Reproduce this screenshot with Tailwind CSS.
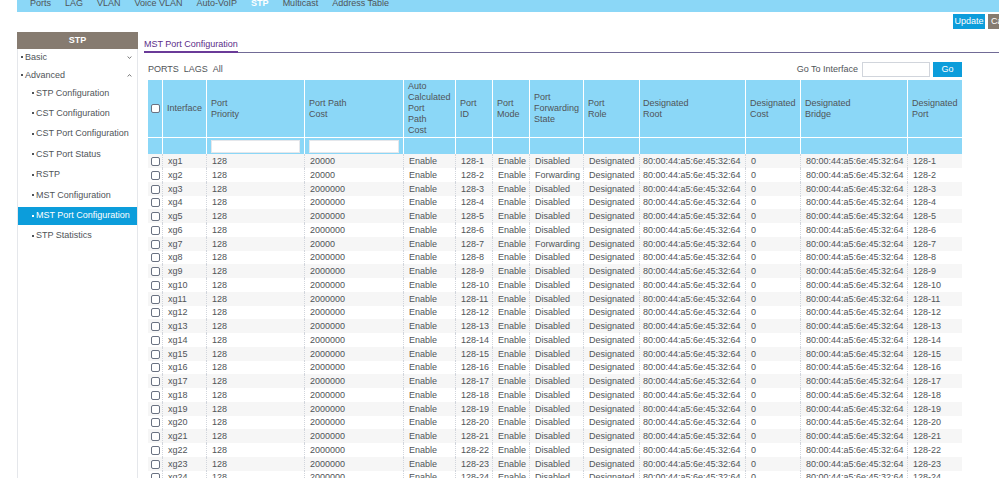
<!DOCTYPE html>
<html lang="en">
<head>
    <meta charset="UTF-8">
    <meta name="viewport" content="width=device-width, initial-scale=1.0">
    <title>MST Port Configuration</title>
    <script src="https://cdn.jsdelivr.net/npm/@tailwindcss/browser@4"></script>
</head>
<body class="h-screen overflow-hidden flex flex-col pl-[17px] bg-white font-['Liberation_Sans',Arial,sans-serif] text-[9px] leading-[11px] text-[#505458]">
    <!-- Top tabs -->
    <nav class="h-3 shrink-0 flex gap-[14px] pl-[13px] leading-[7px] bg-[#8bd7f7]">
        <a href="#">Ports</a>
        <a href="#">LAG</a>
        <a href="#">VLAN</a>
        <a href="#">Voice VLAN</a>
        <a href="#">Auto-VoIP</a>
        <a href="#" class="font-bold text-white">STP</a>
        <a href="#">Multicast</a>
        <a href="#">Address Table</a>
    </nav>

    <!-- Page buttons -->
    <div class="shrink-0 flex justify-end gap-[3px] pt-[2px] pb-[3px] -mr-[23px]">
        <button class="h-[15px] w-8 bg-[#0c9ddb] text-white">Update</button>
        <button class="h-[15px] w-[34px] bg-[#867b70] text-white">Cancel</button>
    </div>

    <div class="flex flex-1 min-h-0">
        <!-- Sidebar -->
        <aside class="w-[121px] shrink-0 border-x border-gray-200">
            <h2 class="-mx-px h-[17px] leading-[17px] text-center font-bold text-white bg-[#867b70]">STP</h2>
            <button class="w-full h-4 flex items-center gap-[2px] pl-[3px] pr-[5px]">
                <span class="size-[2px] bg-[#505458]"></span>Basic
                <svg class="ml-auto" width="5" height="5" viewBox="0 0 5 5" fill="none" stroke="#777"><path d="M.7 1.5l1.8 2 1.8-2"/></svg>
            </button>
            <button class="w-full h-[20px] flex items-center gap-[2px] pl-[3px] pr-[5px]">
                <span class="size-[2px] bg-[#505458]"></span>Advanced
                <svg class="ml-auto" width="5" height="5" viewBox="0 0 5 5" fill="none" stroke="#777"><path d="M.7 3.5l1.8-2 1.8 2"/></svg>
            </button>
            <ul id="menu" class="h-[161px] -mt-px flex flex-col justify-between whitespace-nowrap"></ul>
        </aside>

        <main class="flex-1 min-w-0 pl-[6px]">
            <div class="mt-[5px] flex border-b border-[#716b96]">
                <h1 class="h-4 -mb-px leading-[14px] border-b-2 border-[#6a3a98] text-[#5c2d88]">MST Port Configuration</h1>
            </div>

            <div class="pl-1 pr-[37px]">
                <div class="flex items-center pt-[9px] pb-[3px]">
                    <div class="flex gap-[5px]">
                        <a href="#">PORTS</a>
                        <a href="#">LAGS</a>
                        <a href="#">All</a>
                    </div>
                    <label for="goto" class="ml-auto">Go To Interface</label>
                    <input id="goto" type="text" class="ml-1 w-[68px] h-[15px] px-1 border border-gray-300">
                    <button class="ml-[3px] w-[29px] h-[15px] bg-[#0c9ddb] text-white">Go</button>
                </div>

                <table class="w-full table-fixed border-separate border-spacing-0 text-left whitespace-nowrap">
                    <colgroup>
                        <col class="w-[15px]"><col class="w-[44px]"><col class="w-[98px]"><col class="w-[99px]">
                        <col class="w-[52px]"><col class="w-[37px]"><col class="w-[37px]"><col class="w-[54px]">
                        <col class="w-[56px]"><col class="w-[106px]"><col class="w-[55px]"><col class="w-[107px]">
                        <col class="w-[54px]">
                    </colgroup>
                    <thead class="bg-[#8bd7f7] [&_th]:p-0 [&_th]:pl-1 [&_th]:font-normal [&_th]:border-r [&_th]:border-white [&_th:last-child]:border-r-0">
                        <tr class="h-[58px] [&_th]:border-b">
                            <th class="!pl-[3px]"><input type="checkbox" aria-label="Select all" class="block size-[9px] appearance-none rounded-[2px] border border-gray-500 bg-white"></th>
                            <th>Interface</th>
                            <th>Port<br>Priority</th>
                            <th>Port Path<br>Cost</th>
                            <th>Auto<br>Calculated<br>Port<br>Path<br>Cost</th>
                            <th>Port<br>ID</th>
                            <th>Port<br>Mode</th>
                            <th>Port<br>Forwarding<br>State</th>
                            <th>Port<br>Role</th>
                            <th class="!pl-[3px]">Designated<br>Root</th>
                            <th>Designated<br>Cost</th>
                            <th>Designated<br>Bridge</th>
                            <th>Designated<br>Port</th>
                        </tr>
                        <tr class="h-4">
                            <th></th>
                            <th></th>
                            <th class="!pr-1"><input type="text" aria-label="Port Priority" class="block w-full h-[13px] px-1 bg-white border border-gray-200"></th>
                            <th class="!pr-1"><input type="text" aria-label="Port Path Cost" class="block w-full h-[13px] px-1 bg-white border border-gray-200"></th>
                            <th></th>
                            <th></th>
                            <th></th>
                            <th></th>
                            <th></th>
                            <th></th>
                            <th></th>
                            <th></th>
                            <th></th>
                        </tr>
                    </thead>
                    <tbody id="ports" class="leading-[13px] [&_td]:p-0 [&_td]:pl-[5px] [&_td]:border-r [&_td]:border-dotted [&_td]:border-gray-300 [&_td:last-child]:border-r-0"></tbody>
                </table>
            </div>
        </main>
    </div>

    <script>
        const menu = ["STP Configuration", "CST Configuration", "CST Port Configuration", "CST Port Status",
            "RSTP", "MST Configuration", "MST Port Configuration", "STP Statistics"];

        document.getElementById("menu").innerHTML = menu.map(item => {
            const active = item === "MST Port Configuration";
            return `<li><a href="#" class="h-[18px] flex items-center gap-[2px] pl-[14px] ${active ? "bg-[#0c9ddb] text-white" : ""}">
                <span class="size-[2px] ${active ? "bg-white" : "bg-[#505458]"}"></span>${item}</a></li>`;
        }).join("");

        // Ports with a live link
        const linkUp = [2, 7];
        const bridge = "80:00:44:a5:6e:45:32:64";
        let rows = "";

        for (let i = 1; i <= 24; i++) {
            const cost = i === 1 || linkUp.includes(i) ? 20000 : 2000000;
            const state = linkUp.includes(i) ? "Forwarding" : "Disabled";
            rows += `<tr class="h-[14px] nth-[4n]:h-[13px] odd:bg-[#f6f6f6]">
                <td class="!pl-[3px]"><input type="checkbox" aria-label="Select xg${i}" class="block size-[9px] appearance-none rounded-[2px] border border-gray-500 bg-white"></td>
                <td>xg${i}</td>
                <td>128</td>
                <td>${cost}</td>
                <td>Enable</td>
                <td>128-${i}</td>
                <td>Enable</td>
                <td>${state}</td>
                <td>Designated</td>
                <td class="!pl-[3px]">${bridge}</td>
                <td>0</td>
                <td>${bridge}</td>
                <td>128-${i}</td>
            </tr>`;
        }
        document.getElementById("ports").innerHTML = rows;
    </script>
</body>
</html>
